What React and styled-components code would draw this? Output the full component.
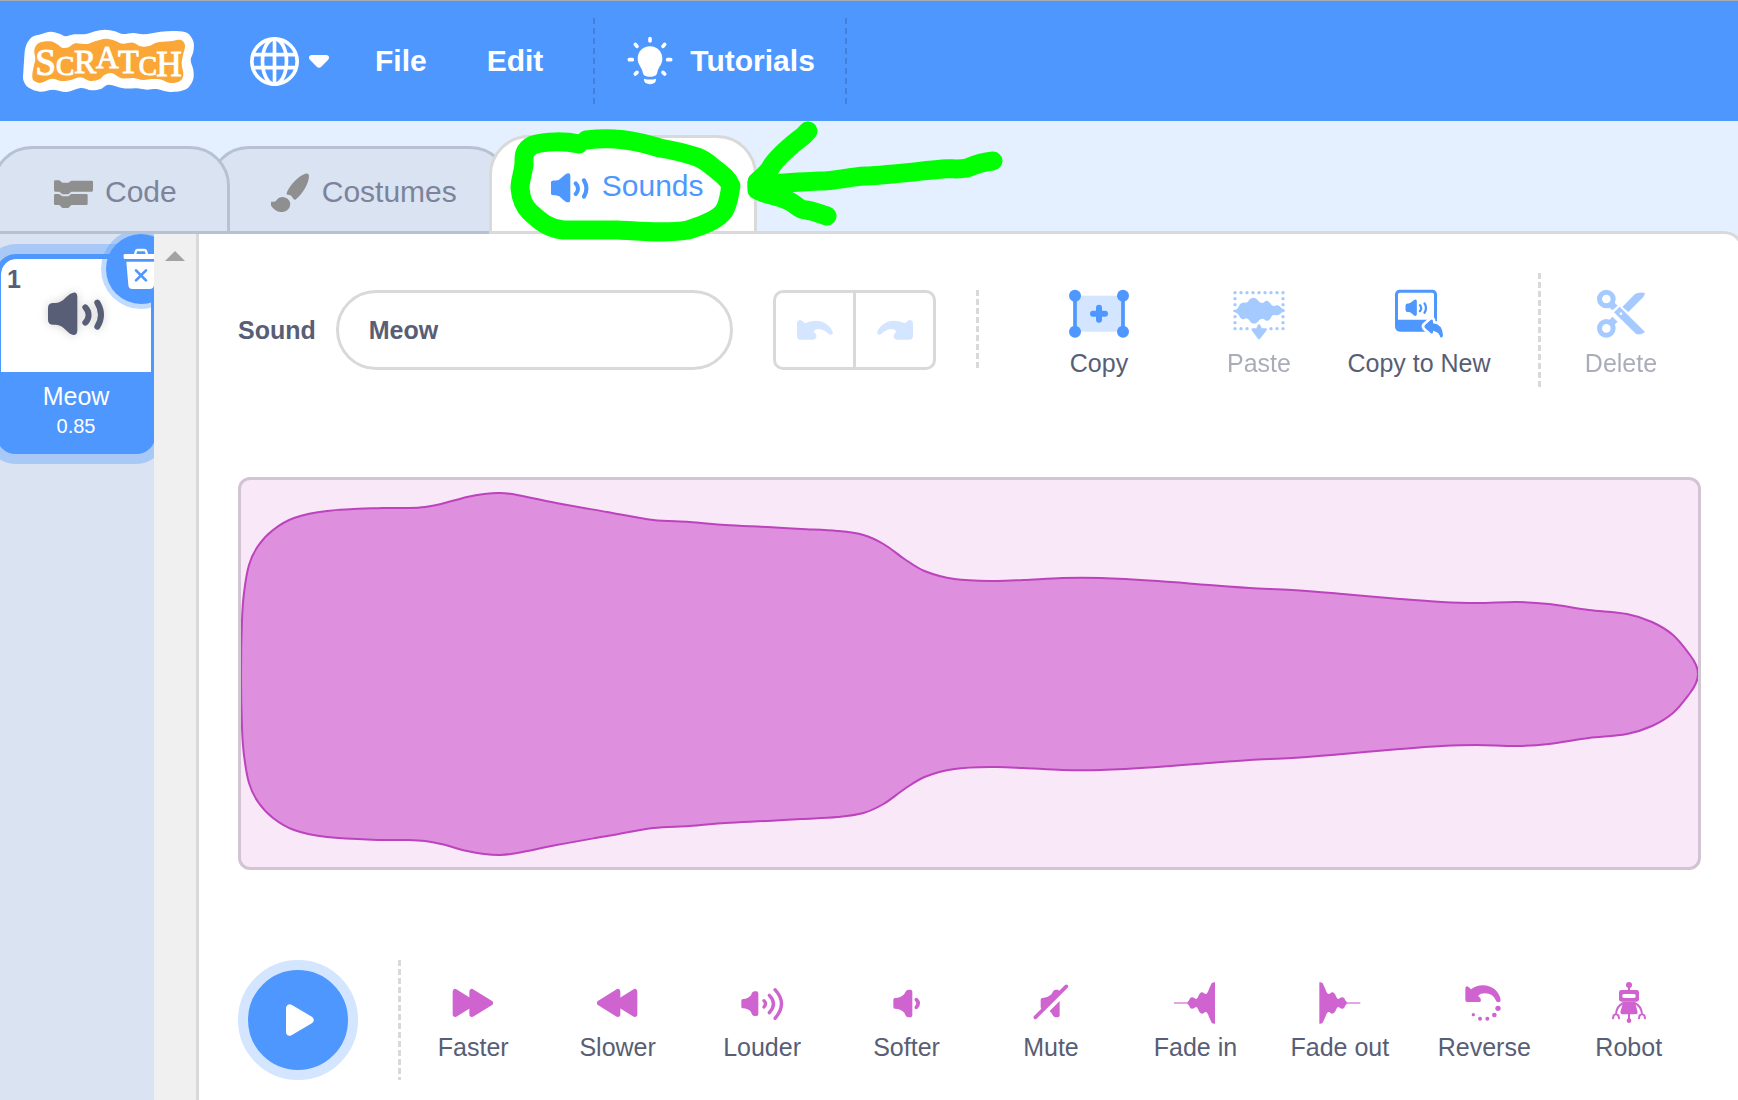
import React from "react";
import styled, { createGlobalStyle } from "styled-components";

const blue = "#4d97ff";
const ink = "#575e75";
const line = "#d9d9d9";
const magenta = "#cf63cf";

const GlobalStyle = createGlobalStyle`
  *, *::before, *::after { box-sizing: border-box; }
  body {
    margin: 0;
    background: #e4f0ff;
    color: ${ink};
    font-family: "Liberation Sans", Arial, Helvetica, sans-serif;
    font-size: 25px;
  }
  button, input { font: inherit; color: inherit; }
  button { padding: 0; border: 0; background: none; cursor: pointer; }
  svg { display: block; flex: none; }
`;

const Page = styled.div`
  display: flex;
  flex-direction: column;
  min-height: 100vh;
  position: relative;
  overflow: hidden;
`;

/* ---------- menu bar ---------- */

const MenuBar = styled.header`
  display: flex;
  align-items: center;
  height: 121px;
  padding-left: 23px;
  border-top: 1px solid #a9abb0;
  background: ${blue};
  color: #fff;
`;

const Logo = styled.a`
  display: block;
  margin-right: 55px;
`;

const LanguageButton = styled.button`
  display: flex;
  align-items: center;
  gap: 10px;
  margin-right: 16px;
`;

const MenuItem = styled.button`
  display: flex;
  align-items: center;
  gap: 15px;
  height: 100%;
  padding: 0 30px;
  font-size: 30px;
  line-height: 36px;
  font-weight: bold;
`;

const MenuDivider = styled.div`
  width: 2px;
  height: 86px;
  margin-left: ${(p) => (p.$spaced ? "20px" : "0")};
  background: repeating-linear-gradient(#4280d9 0 6px, transparent 6px 10px);
`;

/* ---------- tabs ---------- */

const TabList = styled.div`
  display: flex;
  align-items: flex-end;
  height: 113px;
  margin: 0 0 -3px -8px;
  position: relative;
  z-index: 1;
`;

const Tab = styled.button`
  display: flex;
  align-items: center;
  gap: 11px;
  height: ${(p) => (p.$selected ? "99px" : "88px")};
  padding: 3px 50px 0 59px;
  border: 3px solid ${(p) => (p.$selected ? line : "#b8c1d2")};
  border-radius: 40px 40px 0 0;
  background: ${(p) => (p.$selected ? "#fff" : "#d9e3f2")};
  color: ${(p) => (p.$selected ? blue : "#7c839a")};
  font-size: 30px;
  line-height: 36px;
  position: relative;
  z-index: ${(p) => p.$level};
  & + & { margin-left: -21px; }
`;

/* ---------- main panel ---------- */

const Panel = styled.main`
  display: flex;
  flex: 1;
  margin-right: -6px;
  border: 3px solid ${line};
  border-left: 0;
  border-bottom: 0;
  border-top-right-radius: 20px;
  background: #fff;
`;

const Sidebar = styled.aside`
  display: flex;
  flex: none;
  border-right: 3px solid ${line};
`;

const SoundList = styled.ul`
  width: 154px;
  margin: 0;
  padding: 20px 0 0;
  list-style: none;
  overflow: hidden;
  background: #d9e3f2;
`;

const ScrollTrack = styled.div`
  display: flex;
  justify-content: center;
  width: 42px;
  padding-top: 17px;
  background: #f0f0f0;
`;

const SoundItem = styled.li`
  position: relative;
  width: 160px;
  margin-left: -4px;
`;

const SoundCard = styled.button`
  display: flex;
  flex-direction: column;
  width: 100%;
  height: 200px;
  border: 5px solid ${blue};
  border-radius: 20px;
  overflow: hidden;
  background: ${blue};
  color: #fff;
  box-shadow: 0 0 0 10px rgba(77, 151, 255, 0.35);
`;

const Thumb = styled.span`
  display: grid;
  place-items: center;
  width: 100%;
  height: 113px;
  padding-bottom: 4px;
  border-radius: 15px 15px 0 0;
  background: #fff;
  color: ${ink};
  svg { filter: drop-shadow(0 0 5px rgba(0, 0, 0, 0.18)); }
`;

const ItemNumber = styled.span`
  position: absolute;
  top: 10px;
  left: 11px;
  color: ${ink};
  font-weight: bold;
  line-height: 30px;
`;

const ItemName = styled.span`
  width: 100%;
  padding-top: 9px;
  line-height: 30px;
  text-align: center;
`;

const ItemDetail = styled.span`
  width: 100%;
  padding-top: 3px;
  font-size: 20px;
  line-height: 24px;
  text-align: center;
`;

const DeleteBadge = styled.button`
  display: grid;
  place-items: center;
  position: absolute;
  top: -20px;
  left: 110px;
  width: 70px;
  height: 70px;
  border-radius: 50%;
  background: ${blue};
  box-shadow: 0 0 0 5px rgba(77, 151, 255, 0.35);
`;

/* ---------- sound editor ---------- */

const Editor = styled.section`
  display: flex;
  flex-direction: column;
  gap: 90px;
  flex: 1;
  min-width: 0;
  padding: 39px 40px 19px 39px;
`;

const Toolbar = styled.div`
  display: flex;
  align-items: center;
  height: 114px;
`;

const NameLabel = styled.label`
  margin-right: 20px;
  font-weight: bold;
`;

const NameInput = styled.input`
  flex: 1;
  min-width: 0;
  height: 80px;
  padding: 0 30px;
  border: 3px solid ${line};
  border-radius: 40px;
  background: #fff;
  font-weight: bold;
  outline: 0;
`;

const HistoryGroup = styled.div`
  display: flex;
  margin: 0 40px;
  border: 3px solid ${line};
  border-radius: 10px;
`;

const HistoryButton = styled.button`
  display: grid;
  place-items: center;
  width: 77px;
  height: 74px;
  color: #d3e5ff;
  & + & {
    width: 80px;
    border-left: 3px solid ${line};
  }
`;

const Divider = styled.div`
  flex: none;
  width: 3px;
  height: ${(p) => p.$height};
  background: repeating-linear-gradient(${line} 0 6px, transparent 6px 9px);
`;

const ToolGroup = styled.div`
  display: flex;
  margin: 0 39px 0 40px;
`;

const ToolButton = styled.button`
  display: flex;
  flex-direction: column;
  align-items: center;
  gap: 10px;
  width: 160px;
  padding-top: 6px;
  line-height: 30px;
  white-space: nowrap;
  opacity: ${(p) => (p.disabled ? 0.5 : 1)};
`;

const Waveform = styled.div`
  height: 393px;
  border: 3px solid #d2c4d3;
  border-radius: 12px;
  overflow: hidden;
  background: #f8e8f8;
  svg { width: 100%; height: 100%; }
`;

const EffectBar = styled.div`
  display: flex;
  align-items: center;
`;

const PlayButton = styled.button`
  display: grid;
  place-items: center;
  width: 120px;
  height: 120px;
  margin-right: 40px;
  border: 10px solid #d3e5ff;
  border-radius: 50%;
  background: ${blue};
`;

const Effects = styled.div`
  display: flex;
  flex: 1;
`;

const EffectButton = styled.button`
  display: flex;
  flex: 1;
  flex-direction: column;
  align-items: center;
  gap: 4px;
  line-height: 30px;
  white-space: nowrap;
`;

const Annotation = styled.svg`
  position: absolute;
  top: 110px;
  left: 500px;
  z-index: 2;
  pointer-events: none;
`;

/* ---------- drawings ---------- */

/* Smooth closed curve through the points, tangents weighted by segment length. */
const smoothLoop = (pts) => {
  const n = pts.length;
  const at = (i) => pts[(i + n) % n];
  const dist = (p, q) => Math.hypot(q[0] - p[0], q[1] - p[1]);
  const tangent = (i) => {
    const [a, b, c] = [at(i - 1), at(i), at(i + 1)];
    const span = dist(a, b) + dist(b, c);
    return [(c[0] - a[0]) / span, (c[1] - a[1]) / span];
  };
  let d = `M${at(0)}`;
  for (let i = 0; i < n; i += 1) {
    const [p, q] = [at(i), at(i + 1)];
    const [s, t] = [tangent(i), tangent(i + 1)];
    const k = dist(p, q) / 3;
    d += `C${p[0] + s[0] * k},${p[1] + s[1] * k} ${q[0] - t[0] * k},${q[1] - t[1] * k} ${q}`;
  }
  return `${d}Z`;
};

const logoOuter = smoothLoop([
  [70, 215], [72, 185], [77, 140], [95, 112], [125, 102], [152, 95], [180, 102], [196, 109],
  [222, 103], [258, 102], [285, 94], [315, 89], [345, 94], [367, 102], [400, 99], [430, 103],
  [455, 100], [482, 95], [530, 93], [562, 99], [580, 124], [580, 155], [572, 180], [580, 210],
  [579, 240], [558, 268], [510, 276], [470, 267], [440, 269], [410, 265], [370, 265], [325, 254],
  [302, 267], [275, 271], [242, 264], [200, 276], [160, 269], [120, 275], [84, 262], [70, 240],
]);

const logoInner = smoothLoop([
  [97, 225], [101, 200], [106, 178], [103, 150], [115, 130], [150, 124], [172, 133], [186, 143],
  [206, 142], [225, 130], [262, 132], [285, 124], [318, 116], [345, 122], [367, 131], [400, 128],
  [422, 139], [447, 138], [468, 128], [510, 124], [543, 120], [555, 135], [549, 165], [545, 192],
  [550, 225], [540, 243], [510, 249], [480, 238], [455, 237], [430, 240], [400, 234], [365, 235],
  [335, 219], [314, 224], [298, 238], [270, 243], [242, 232], [215, 239], [185, 243], [155, 236],
  [120, 249], [100, 241],
]);

const logoLetters = [
  ["S", 106, 226, 112],
  ["C", 168, 224, 82],
  ["R", 222, 219, 100],
  ["A", 288, 204, 94],
  ["T", 354, 219, 102],
  ["C", 416, 224, 82],
  ["H", 469, 228, 106],
];

const ScratchLogo = () => (
  <svg width="172" height="64" viewBox="69 87 516 192" role="img" aria-label="Scratch">
    <path d={logoOuter} fill="#fff" />
    <path d={logoInner} fill="#faa738" />
    <text fill="#fff" stroke="#fff" strokeWidth="3" fontFamily='"Liberation Serif", serif'>
      {logoLetters.map(([letter, x, y, size], i) => (
        <tspan key={i} x={x} y={y} fontSize={size}>
          {letter}
        </tspan>
      ))}
    </text>
  </svg>
);

const Globe = () => (
  <svg width="49" height="49" viewBox="0 0 147 147" fill="none" stroke="#fff" strokeWidth="11">
    <circle cx="73.500" cy="73.500" r="68" />
    <ellipse cx="73.500" cy="73.500" rx="36" ry="68" />
    <path d="M73.500 5V142M12 53H135M12 92H135" />
  </svg>
);

const Caret = () => (
  <svg width="20" height="13" viewBox="0 0 60 39" fill="#fff">
    <path d="M9 0H51Q60 0 60 8Q60 12 56 16L36 36Q30 41 24 36L4 16Q0 12 0 8Q0 0 9 0Z" />
  </svg>
);

const Bulb = () => (
  <svg width="50" height="50" viewBox="615 109 150 150" fill="#fff">
    <path d="M690 140C711 140 727 156 727 177C727 193 717 201 713 213Q711 228 701 230Q690 233 679 230Q669 228 667 213C663 201 653 193 653 177C653 156 669 140 690 140Z" />
    <path d="M672 237Q690 242 708 237Q709 247 701 251Q690 257 679 251Q671 247 672 237Z" />
    <path
      d="M690 117V124M646 134L651 140M734 134L729 140M628 180H637M743 180H752M646 223L651 218M734 223L729 218"
      stroke="#fff" strokeWidth="11" strokeLinecap="round"
    />
  </svg>
);

const Blocks = () => (
  <svg width="40" height="40" viewBox="162 519 120 120" fill="#8f8f8f">
    <path d="M166 544H178L187 551H205L214 545H275Q279 545 279 549V573Q279 578 275 578H214L205 586H187L178 578H166Q162 578 162 573V548Q162 544 166 544Z" />
    <path d="M166 585H177L187 592H205L214 585H259Q263 585 263 589V614Q263 618 259 618H214L205 627H187L178 618H166Q162 618 162 614V589Q162 585 166 585Z" />
  </svg>
);

const Brush = () => (
  <svg width="40" height="40" viewBox="813 515 120 120" fill="#8f8f8f">
    <path d="M925 521Q931 530 919 556Q906 582 886 598Q880 598 878 592Q873 582 862 583Q858 582 861 575Q874 548 898 530Q918 515 925 521Z" />
    <path d="M848 590Q868 592 871 610Q870 630 849 635Q824 637 811 612Q809 603 818 604Q826 606 831 598Q836 590 848 590Z" />
  </svg>
);

const SpeakerShape = () => (
  <>
    <path d="M144 265Q144 250 160 250H168Q184 249 198 233L210 223Q232 210 232 232V332Q232 353 210 342L198 332Q184 316 168 315H160Q144 315 144 300Z" />
    <path
      d="M256 263C269 276 269 296 256 309M292 249C306 272 306 298 292 321"
      fill="none" stroke="currentColor" strokeWidth="18" strokeLinecap="round"
    />
  </>
);

const Speaker = ({ width, height, viewBox }) => (
  <svg width={width} height={height} viewBox={viewBox} fill="currentColor">
    <SpeakerShape />
  </svg>
);

const Trash = () => (
  <svg width="40" height="44" viewBox="363 81 120 132">
    <path d="M405 104L408 93Q409 90 413 90H433Q437 90 438 93L441 104" fill="none" stroke="#fff" strokeWidth="7" />
    <rect x="371" y="102" width="104" height="15" rx="4" fill="#fff" />
    <path d="M379 125H467L462 195Q461 207 449 207H397Q386 207 385 195Z" fill="#fff" />
    <path d="M408 151L438 181M438 151L408 181" stroke={blue} strokeWidth="8" strokeLinecap="round" />
  </svg>
);

const Undo = ({ flip }) => (
  <svg width="36" height="20" viewBox="0 0 108 60" fill="currentColor">
    <path
      transform={flip ? "translate(108 0) scale(-1 1)" : undefined}
      d="M0 11Q0 0 10 0Q15 1 24 10Q40 2 56 2C80 2 99 16 107 35Q109 44 101 44Q97 45 93 40Q80 28 66 27Q55 27 50 34L56 42Q60 48 57 54Q54 59 48 59H12Q0 59 0 48Z"
    />
  </svg>
);

const ToolIcon = ({ x, children }) => (
  <svg width="60" height="50" viewBox={`${x} 85 180 150`} fill={blue} overflow="visible">
    {children}
  </svg>
);

const CopyIcon = () => (
  <ToolIcon x={987}>
    <rect x="1005" y="108" width="144" height="108" fill="#d3e5ff" />
    <path d="M1005 108V216M1149 108V216" stroke={blue} strokeWidth="11" />
    <circle cx="1005" cy="108" r="18" />
    <circle cx="1149" cy="108" r="18" />
    <circle cx="1005" cy="216" r="18" />
    <circle cx="1149" cy="216" r="18" />
    <path d="M1077 144V180M1059 162H1095" stroke={blue} strokeWidth="18" strokeLinecap="round" />
  </ToolIcon>
);

const pasteDots = [
  ...Array.from({ length: 9 }, (_, i) => [165 + i * 18, 99]),
  ...[117, 135, 171, 189].flatMap((y) => [[165, y], [309, y]]),
  ...[165, 183, 201, 273, 291, 309].map((x) => [x, 207]),
];

const PasteIcon = () => (
  <ToolIcon x={147}>
    {pasteDots.map(([x, y]) => (
      <circle key={`${x}-${y}`} cx={x} cy={y} r="5" />
    ))}
    <path d="M160 150H168Q174 147 180 134Q186 126 196 129Q203 130 208 120Q220 108 232 120Q238 130 246 130Q252 130 256 124Q264 120 271 131Q275 140 282 139Q292 134 299 140Q303 148 314 150V156Q304 157 300 163Q292 170 284 166Q276 164 272 176Q265 188 255 181Q249 175 243 178Q238 180 233 187Q222 197 211 187Q205 176 198 176Q188 182 181 174Q174 158 160 156Z" />
    <path d="M237 192Q242 196 245 206H257Q263 207 259 213L240 237Q237 241 234 237L216 213Q212 207 218 206H229Q232 196 237 192Z" />
  </ToolIcon>
);

const CopyToNewIcon = () => (
  <ToolIcon x={627}>
    <rect x="649.500" y="94.500" width="117" height="117" rx="10" fill="#fff" stroke={blue} strokeWidth="9" />
    <path d="M649 180H767V204Q767 212 759 212H657Q649 212 649 204Z" />
    <svg x="675" y="115" width="68" height="58" viewBox="140 215 176 134" color={blue}>
      <SpeakerShape />
    </svg>
    <path
      d="M735 196L752 181Q759 177 759 186V191Q787 194 789 226Q788 236 781 233Q778 217 759 213V218Q758 224 752 220L735 205Q731 200 735 196Z"
      stroke="#fff" strokeWidth="16" strokeLinejoin="round"
    />
    <path d="M735 196L752 181Q759 177 759 186V191Q787 194 789 226Q788 236 781 233Q778 217 759 213V218Q758 224 752 220L735 205Q731 200 735 196Z" />
  </ToolIcon>
);

const ScissorsIcon = () => (
  <ToolIcon x={1233}>
    <circle cx="1279" cy="118" r="20.500" fill="none" stroke={blue} strokeWidth="15" />
    <circle cx="1279" cy="206" r="20.500" fill="none" stroke={blue} strokeWidth="15" />
    <path d="M1298 124L1313 138L1297 152L1284 140Z" />
    <path d="M1288 182L1297 171L1313 186L1300 198Z" />
    <path d="M1327 142L1364 104Q1376 96 1395 100Q1393 109 1388 114L1345 157Z" />
    <path d="M1302 158L1319 141L1395 217Q1384 227 1368 223Z" />
    <circle cx="1323" cy="162" r="4" fill="#fff" />
  </ToolIcon>
);

const PlayIcon = () => (
  <svg width="50" height="50" viewBox="159 168 150 150" fill="#fff" stroke="#fff" strokeWidth="22" strokeLinejoin="round">
    <path d="M209 207V279L270 243Z" />
  </svg>
);

const EffectIcon = ({ x = 0, y = 117, children }) => (
  <svg width="50" height="50" viewBox={`${x} ${y} 150 150`} fill={magenta}>
    {children}
  </svg>
);

const roundStroke = { stroke: magenta, strokeLinecap: "round", strokeLinejoin: "round" };

const FasterIcon = () => (
  <EffectIcon x={685}>
    <path {...roundStroke} strokeWidth="16" d="M707 158V226L761 192ZM757 158V226L812 192Z" />
  </EffectIcon>
);

const SlowerIcon = () => (
  <EffectIcon x={1118}>
    <path {...roundStroke} strokeWidth="16" d="M1243 158V226L1189 192ZM1192 158V226L1138 192Z" />
  </EffectIcon>
);

const LouderIcon = () => (
  <EffectIcon x={143}>
    <path d="M161 180Q176 180 185 169Q188 157 196 157H201Q207 157 207 163V225Q207 231 201 231H196Q188 231 185 219Q176 208 161 208Q156 208 156 203V185Q156 180 161 180Z" />
    <path {...roundStroke} fill="none" strokeWidth="10" d="M224 185Q233 194 224 204M240 169Q265 194 240 221M257 152Q296 194 257 238" />
  </EffectIcon>
);

const SofterIcon = () => (
  <EffectIcon x={576}>
    <path d="M615 177Q632 177 643 165Q648 152 656 152H661Q667 152 667 158V229Q667 235 661 235H656Q648 235 643 221Q632 209 615 209Q610 209 610 204V182Q610 177 615 177Z" />
    <path {...roundStroke} fill="none" strokeWidth="11" d="M679 182Q690 193 679 205" />
  </EffectIcon>
);

const MuteIcon = () => (
  <EffectIcon x={1009}>
    <path d="M1053 182Q1053 177 1058 177Q1076 176 1086 165Q1091 152 1099 152H1104L1110 156L1055 211L1053 205Z" />
    <path d="M1110 186V229Q1110 235 1104 235H1099Q1091 235 1086 223L1080 216Z" />
    <path {...roundStroke} strokeWidth="11" d="M1037 235L1130 142" />
  </EffectIcon>
);

const FadeIcon = ({ out }) => (
  <EffectIcon y={0}>
    <g transform={out ? "translate(148 0) scale(-1 1)" : undefined}>
      <path d="M12 75H56" stroke={magenta} strokeOpacity="0.7" strokeWidth="5" />
      <path d="M53 71Q58 68 60 61Q66 55 74 61Q80 66 84 57Q89 43 96 43Q101 43 105 48Q112 50 117 33L125 16Q129 12 135 13V137Q129 138 125 134L117 117Q112 100 105 102Q101 107 96 107Q89 107 84 93Q80 84 74 89Q66 95 60 89Q58 82 53 79Z" />
    </g>
  </EffectIcon>
);

const ReverseIcon = () => (
  <EffectIcon y={0}>
    <path d="M19 34Q19 25 24 25Q28 25 36 34Q52 22 72 22C100 22 122 42 125 66Q125 73 118 73Q112 73 110 66Q102 47 78 46Q64 46 57 53L64 61Q69 72 60 72H25Q19 72 19 66Z" />
    <circle cx="117" cy="91" r="8" />
    <circle cx="106" cy="111" r="7" />
    <circle cx="85" cy="122" r="6" />
    <circle cx="63" cy="122" r="6" />
    <circle cx="43" cy="110" r="5" />
  </EffectIcon>
);

const RobotIcon = () => (
  <EffectIcon y={0}>
    <circle cx="75" cy="21" r="9" />
    <path d="M75 25V40M75 108V126" stroke={magenta} strokeWidth="6" />
    <rect x="45" y="36" width="60" height="35" rx="7" />
    <rect x="55" y="48" width="40" height="12" rx="5" fill="#fff" />
    <path d="M58 71H92L101 102Q101 109 94 109H56Q49 109 49 102Z" />
    <path
      {...roundStroke} fill="none" strokeWidth="6"
      d="M58 75Q38 84 36 108M92 75Q112 84 114 108M27 121L29 112L36 108L43 112L45 121M105 121L107 112L114 108L121 112L123 121"
    />
    <circle cx="75" cy="128" r="7" />
  </EffectIcon>
);

/* Upper edge of the loudness envelope; the lower edge mirrors it. */
const MID = 194;
const envelope = [
  [0, MID], [1, 140], [3, 113], [8, 85], [17, 66], [32, 50], [53, 38], [86, 31], [142, 28],
  [168, 28], [184, 27], [200, 24], [226, 17], [243, 14], [259, 13], [276, 15], [315, 23],
  [366, 32], [412, 40], [448, 42], [484, 45], [525, 47], [560, 49], [596, 51], [622, 55],
  [642, 64], [663, 79], [683, 91], [713, 99], [754, 101], [782, 100], [821, 98], [859, 98],
  [916, 101], [967, 105], [1008, 108], [1050, 110], [1101, 114], [1158, 119], [1200, 122],
  [1235, 123], [1276, 122], [1307, 124], [1347, 130], [1385, 134], [1410, 142], [1431, 155],
  [1448, 175], [1454, 185], [1456, MID],
];

const wavePath = smoothLoop([
  ...envelope,
  ...envelope.slice(1, -1).reverse().map(([x, y]) => [x, 2 * MID - y]),
]);

const effects = [
  ["Faster", <FasterIcon />],
  ["Slower", <SlowerIcon />],
  ["Louder", <LouderIcon />],
  ["Softer", <SofterIcon />],
  ["Mute", <MuteIcon />],
  ["Fade in", <FadeIcon />],
  ["Fade out", <FadeIcon out />],
  ["Reverse", <ReverseIcon />],
  ["Robot", <RobotIcon />],
];

export default function App() {
  return (
    <Page>
      <GlobalStyle />
      <MenuBar>
        <Logo href="#">
          <ScratchLogo />
        </Logo>
        <LanguageButton type="button" aria-label="Language">
          <Globe />
          <Caret />
        </LanguageButton>
        <MenuItem type="button">File</MenuItem>
        <MenuItem type="button">Edit</MenuItem>
        <MenuDivider $spaced />
        <MenuItem type="button">
          <Bulb />
          Tutorials
        </MenuItem>
        <MenuDivider />
      </MenuBar>

      <TabList role="tablist">
        <Tab type="button" role="tab" aria-selected="false" $level={2}>
          <Blocks />
          Code
        </Tab>
        <Tab type="button" role="tab" aria-selected="false" $level={1}>
          <Brush />
          Costumes
        </Tab>
        <Tab type="button" role="tab" aria-selected="true" $selected $level={3}>
          <Speaker width="40" height="40" viewBox="147 195 176 158" />
          Sounds
        </Tab>
      </TabList>

      <Panel>
        <Sidebar>
          <SoundList>
            <SoundItem>
              <SoundCard type="button">
                <Thumb>
                  <ItemNumber>1</ItemNumber>
                  <Speaker width="60" height="46" viewBox="138 214 180 138" />
                </Thumb>
                <ItemName>Meow</ItemName>
                <ItemDetail>0.85</ItemDetail>
              </SoundCard>
              <DeleteBadge type="button" aria-label="Delete sound">
                <Trash />
              </DeleteBadge>
            </SoundItem>
          </SoundList>
          <ScrollTrack>
            <svg width="20" height="10" viewBox="0 0 20 10" fill="#a3a3a3">
              <path d="M10 0L20 10H0Z" />
            </svg>
          </ScrollTrack>
        </Sidebar>

        <Editor>
          <Toolbar>
            <NameLabel htmlFor="sound-name">Sound</NameLabel>
            <NameInput id="sound-name" type="text" defaultValue="Meow" />
            <HistoryGroup>
              <HistoryButton type="button" aria-label="Undo">
                <Undo />
              </HistoryButton>
              <HistoryButton type="button" aria-label="Redo">
                <Undo flip />
              </HistoryButton>
            </HistoryGroup>
            <Divider $height="80px" />
            <ToolGroup>
              <ToolButton type="button">
                <CopyIcon />
                Copy
              </ToolButton>
              <ToolButton type="button" disabled>
                <PasteIcon />
                Paste
              </ToolButton>
              <ToolButton type="button">
                <CopyToNewIcon />
                Copy to New
              </ToolButton>
            </ToolGroup>
            <Divider $height="114px" />
            <ToolButton type="button" disabled>
              <ScissorsIcon />
              Delete
            </ToolButton>
          </Toolbar>

          <Waveform>
            <svg viewBox="0 0 1456 387" preserveAspectRatio="none">
              <path d={wavePath} fill="#de90df" stroke="#bd42bd" strokeWidth="2" vectorEffect="non-scaling-stroke" />
            </svg>
          </Waveform>

          <EffectBar>
            <PlayButton type="button" aria-label="Play">
              <PlayIcon />
            </PlayButton>
            <Divider $height="120px" />
            <Effects>
              {effects.map(([label, icon]) => (
                <EffectButton type="button" key={label}>
                  {icon}
                  {label}
                </EffectButton>
              ))}
            </Effects>
          </EffectBar>
        </Editor>
      </Panel>

      <Annotation
        width="510" height="140" viewBox="500 110 510 140"
        fill="none" stroke="#00ff00" strokeWidth="19" strokeLinecap="round" strokeLinejoin="round"
      >
        <path d="M579 144C565 141 546 141 533 145C523 150 524 157 524 164C523 174 520 180 520 188C521 200 524 206 530 212C540 221 547 228 563 230H618C640 231 665 234 688 230C700 226 717 221 724 211C729 203 729 195 731 186C728 178 720 173 714 168C708 163 705 160 697 157C685 153 672 150 660 148C645 144 635 140 615 139C602 138 594 139 586 140" />
        <path d="M808 131C804 136 801 138 798 140C788 148 777 157 771 167C768 173 762 177 757 182" />
        <path d="M993 161C982 162 974 165 967 168C958 170 950 168 942 169C920 171 890 175 865 176C848 177 835 181 820 181C800 182 775 183 757 186" />
        <path d="M757 190C766 195 779 196 789 201C797 205 799 210 806 210C814 211 820 214 827 216M757 182V190L780 190" />
      </Annotation>
    </Page>
  );
}
